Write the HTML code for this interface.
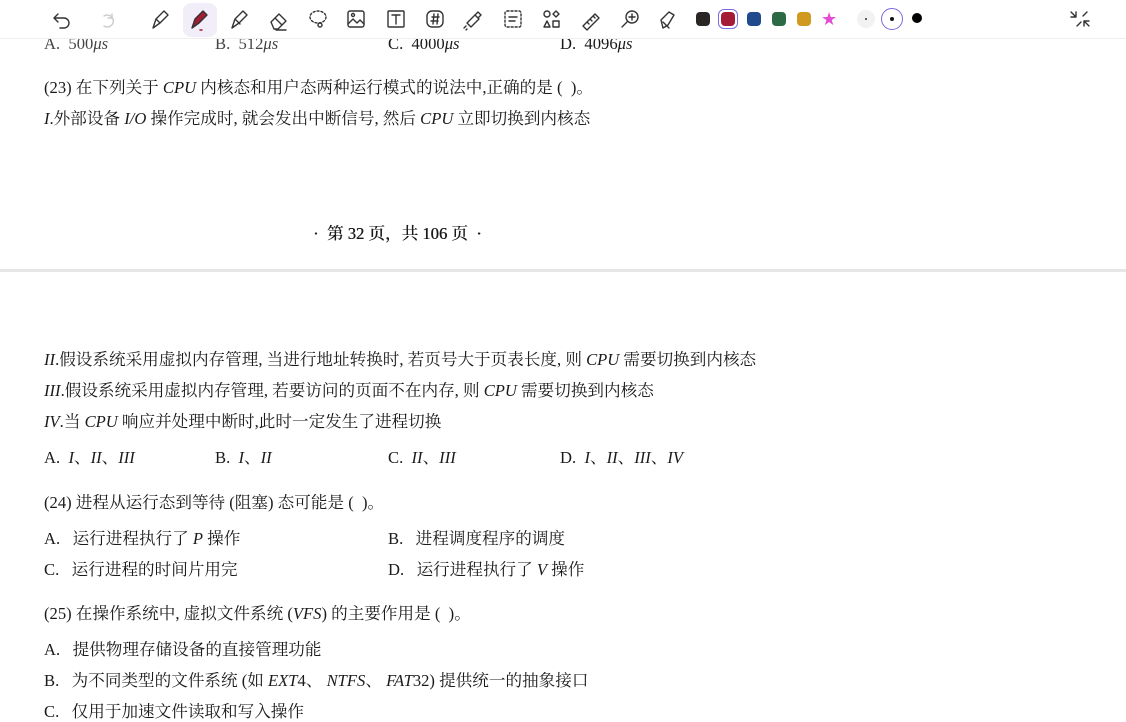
<!DOCTYPE html>
<html><head><meta charset="utf-8"><style>
body{margin:0;width:1126px;height:720px;overflow:hidden;background:#fff;position:relative;font-family:"Liberation Serif","Noto Serif CJK SC",serif;color:#1a1a1a}
.l{position:absolute;left:44px;font-size:16.6px;line-height:20px;white-space:nowrap}
i{font-style:italic}
.o{position:absolute;font-size:16.6px;line-height:20px;white-space:nowrap}
.tb{position:absolute;left:0;top:0;width:1126px;height:38px;background:rgba(255,255,255,0.85);border-bottom:1px solid #eee}
.sw{position:absolute;top:12px;width:14px;height:14px;border-radius:4px}
</style></head><body>
<div class="o" style="left:44px;top:34px;color:#444">A. &nbsp;500<i>μs</i></div>
<div class="o" style="left:215px;top:34px;color:#444">B. &nbsp;512<i>μs</i></div>
<div class="o" style="left:388px;top:34px">C. &nbsp;4000<i>μs</i></div>
<div class="o" style="left:560px;top:34px">D. &nbsp;4096<i>μs</i></div>

<div class="tb"></div>
<svg width="1126" height="38" style="position:absolute;left:0;top:0" fill="none" stroke="#333" stroke-width="1.4" stroke-linecap="round" stroke-linejoin="round">
<rect x="183" y="3" width="34" height="34" rx="8" fill="#f1eefa" stroke="none"/>
<path d="M58 14 l-4 4 4 4 M54 18 h10 a5 5 0 0 1 0 10 h-4"/>
<path d="M104 26 a6 6 0 1 0 0-10 M112 14 v4 h-4" stroke="#ccc"/>
<path d="M153 28 l3-9 8-8 4 4-8 8z M156 19 l4 4"/>
<path d="M192 28 l3-9 8-8 4 4-8 8z" fill="#a31b34" stroke="#333"/><path d="M200 30 h2" stroke="#a31b34"/>
<path d="M232 28 l3-9 8-8 4 4-8 8z M236 20 l4 4"/>
<path d="M271 22 l8-8 7 7-8 8h-4z M275 18 l7 7 M276 30 h10"/>
<ellipse cx="318" cy="17" rx="8" ry="6" stroke-dasharray="2 2"/><circle cx="320" cy="25" r="2"/>
<rect x="348" y="11" width="16" height="16" rx="2"/><path d="M348 24 l5-5 4 4 3-3 4 4"/><circle cx="353" cy="15" r="1.5"/>
<rect x="388" y="11" width="16" height="16" rx="1"/><path d="M392 15 h8 M396 15 v9"/>
<rect x="427" y="11" width="16" height="16" rx="5"/><path d="M432 17 h7 M431 21 h7 M434 14 l-1 10 M438 14 l-1 10"/>
<path d="M467 23 l8-8 4 4-8 8z M475 15 l3-3 3 3-3 3 M464 28 l2-2 M466 30 l1-1"/>
<rect x="505" y="11" width="16" height="16" rx="2" stroke-dasharray="2 2"/><path d="M509 17 h8 M509 21 h6"/>
<circle cx="547" cy="14" r="3"/><path d="M556 11 l3 3-3 3-3-3z M544 27 l3-6 3 6z"/><rect x="553" y="21" width="6" height="6"/>
<path d="M583 26 l12-12 4 4-12 12z M587 22 l2 2 M590 19 l2 2 M593 16 l2 2"/>
<circle cx="632" cy="17" r="6"/><path d="M627 22 l-5 5 M632 14 v6 M629 17 h6"/>
<path d="M663 28 l-2-8 8-8 5 3-6 10z M663 22 l6 6"/>
<path d="M1076 12 v5 h-5 M1071 12 l5 5 M1084 26 v-5 h5 M1089 26 l-5-5 M1087 12 l-4 4 M1077 26 l4-4"/>
</svg>
<div class="sw" style="left:696px;background:#2a2625"></div>
<div style="position:absolute;left:718px;top:9px;width:18px;height:18px;border:1.5px solid #7b6be0;border-radius:6px"></div>
<div class="sw" style="left:721px;background:#a31b34"></div>
<div class="sw" style="left:747px;background:#1f4a8c"></div>
<div class="sw" style="left:772px;background:#2c6a45"></div>
<div class="sw" style="left:797px;background:#d09a20"></div>
<div style="position:absolute;left:821px;top:9px;font-size:18px;color:#e64bd6;font-family:'DejaVu Sans'">★</div>
<div style="position:absolute;left:857px;top:10px;width:18px;height:18px;border-radius:50%;background:#f2f2f2"></div>
<div style="position:absolute;left:865px;top:18px;width:2px;height:2px;border-radius:50%;background:#333"></div>
<div style="position:absolute;left:881px;top:8px;width:20px;height:20px;border-radius:50%;border:1.5px solid #7b6be0"></div>
<div style="position:absolute;left:890px;top:17px;width:4px;height:4px;border-radius:50%;background:#111"></div>
<div style="position:absolute;left:912px;top:13px;width:10px;height:10px;border-radius:50%;background:#000"></div>

<div class="l" style="top:78px">(23) 在下列关于 <i>CPU</i> 内核态和用户态两种运行模式的说法中,正确的是 (&nbsp;&nbsp;)。</div>
<div class="l" style="top:109px"><i>I</i>.外部设备 <i>I/O</i> 操作完成时, 就会发出中断信号, 然后 <i>CPU</i> 立即切换到内核态</div>
<div class="o" style="left:313px;top:224px;font-weight:normal;text-shadow:0.4px 0 0 #1a1a1a">·&nbsp;&nbsp;第 32 页，共 106 页&nbsp;&nbsp;·</div>
<div style="position:absolute;left:0;top:269px;width:1126px;height:3px;background:#e6e6e6"></div>
<div class="l" style="top:350px"><i>II</i>.假设系统采用虚拟内存管理, 当进行地址转换时, 若页号大于页表长度, 则 <i>CPU</i> 需要切换到内核态</div>
<div class="l" style="top:381px"><i>III</i>.假设系统采用虚拟内存管理, 若要访问的页面不在内存, 则 <i>CPU</i> 需要切换到内核态</div>
<div class="l" style="top:412px"><i>IV</i>.当 <i>CPU</i> 响应并处理中断时,此时一定发生了进程切换</div>
<div class="o" style="left:44px;top:448px">A.&nbsp; <i>I</i>、<i>II</i>、<i>III</i></div>
<div class="o" style="left:215px;top:448px">B.&nbsp; <i>I</i>、<i>II</i></div>
<div class="o" style="left:388px;top:448px">C.&nbsp; <i>II</i>、<i>III</i></div>
<div class="o" style="left:560px;top:448px">D.&nbsp; <i>I</i>、<i>II</i>、<i>III</i>、<i>IV</i></div>
<div class="l" style="top:493px">(24) 进程从运行态到等待 (阻塞) 态可能是 (&nbsp;&nbsp;)。</div>
<div class="o" style="left:44px;top:529px">A.&nbsp;&nbsp; 运行进程执行了 <i>P</i> 操作</div>
<div class="o" style="left:388px;top:529px">B.&nbsp;&nbsp; 进程调度程序的调度</div>
<div class="o" style="left:44px;top:560px">C.&nbsp;&nbsp; 运行进程的时间片用完</div>
<div class="o" style="left:388px;top:560px">D.&nbsp;&nbsp; 运行进程执行了 <i>V</i> 操作</div>
<div class="l" style="top:604px">(25) 在操作系统中, 虚拟文件系统 (<i>VFS</i>) 的主要作用是 (&nbsp;&nbsp;)。</div>
<div class="o" style="left:44px;top:640px">A.&nbsp;&nbsp; 提供物理存储设备的直接管理功能</div>
<div class="o" style="left:44px;top:671px">B.&nbsp;&nbsp; 为不同类型的文件系统 (如 <i>EXT</i>4、 <i>NTFS</i>、 <i>FAT</i>32) 提供统一的抽象接口</div>
<div class="o" style="left:44px;top:702px">C.&nbsp;&nbsp; 仅用于加速文件读取和写入操作</div>
</body></html>
